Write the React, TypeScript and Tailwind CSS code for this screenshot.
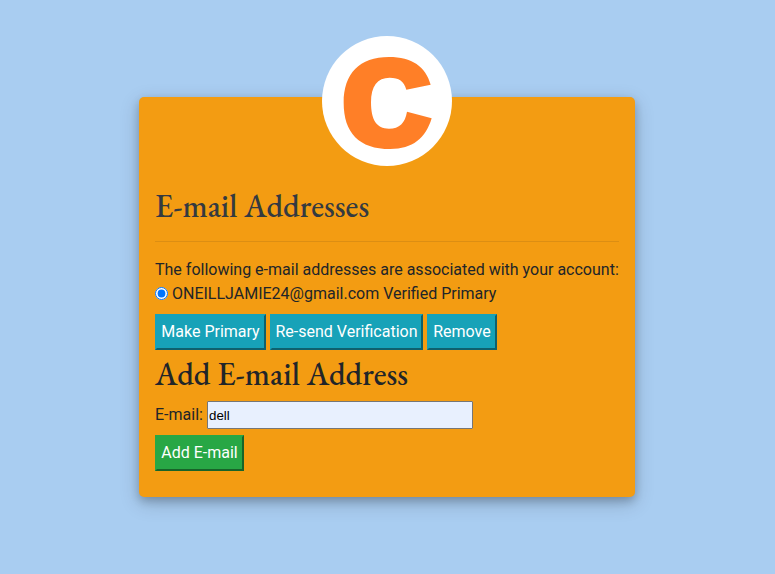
import { useState } from 'react';

function Logo() {
  return (
    <svg className="block size-[130px]" viewBox="0 0 390 390" role="img" aria-label="C">
      <circle cx="195" cy="195" r="195" fill="#fff" />
      <path
        fill="#ff7f27"
        d="M326 146L253 161C246 135 231 125 203 125C166 125 147 150 147 199C147 251 163 278 201 278C233 278 249 261 255 227L329 247C311 307 272 339 205 339C111 339 65 290 65 200C65 113 112 63 201 63C270 63 311 92 326 146Z"
      />
    </svg>
  );
}

function ActionButton({ label, width }: { label: string; width: string }) {
  return (
    <button
      type="button"
      className={`h-9 ${width} border-2 border-t-[#17a2b8] border-l-[#17a2b8] border-r-[#0e616e] border-b-[#0e616e] bg-[#17a2b8] text-center text-base whitespace-nowrap text-white`}
    >
      {label}
    </button>
  );
}

export default function App() {
  const [email, setEmail] = useState('dell');
  return (
    <main className="flex h-[574px] w-full justify-center bg-[#a9cdf1] pt-[97px] pr-px font-[Roboto,sans-serif] text-base leading-6 text-[#212529]">
      <section className="h-[400px] w-[496px] rounded-[5px] bg-[#f39c12] px-4 shadow-[0_4px_8px_0_rgba(0,0,0,0.2),0_6px_20px_0_rgba(0,0,0,0.19)]">
        <div className="-mt-[61px] flex justify-center">
          <Logo />
        </div>
        <h1 className="mt-[21px] h-[54px] font-['EB_Garamond','Liberation_Serif',serif] text-[32px] leading-[38px] font-medium whitespace-nowrap text-[#343a40]">
          E-mail Addresses
        </h1>
        <hr className="border-t border-[#dc8e13]" />
        <p className="mt-4 whitespace-nowrap">
          The following e-mail addresses are associated with your account:
        </p>
        <label className="flex items-center">
          <input type="radio" defaultChecked className="mr-[4px] -mt-0.5 size-[13px]" />
          ONEILLJAMIE24@gmail.com Verified Primary
        </label>
        <div className="mt-2 flex gap-1">
          <ActionButton label="Make Primary" width="w-[111px]" />
          <ActionButton label="Re-send Verification" width="w-[153px]" />
          <ActionButton label="Remove" width="w-[70px]" />
        </div>
        <h2 className="mt-[5px] h-[46px] font-['EB_Garamond','Liberation_Serif',serif] text-[32px] leading-[38px] font-medium whitespace-nowrap">
          Add E-mail Address
        </h2>
        <div className="flex h-7 items-center">
          <label htmlFor="email" className="w-[52px]">
            E-mail:
          </label>
          <input
            id="email"
            type="text"
            value={email}
            onChange={(event) => setEmail(event.target.value)}
            className="h-7 w-[266px] rounded-[1px] border border-[#767676] bg-[#e8f0fe] px-px font-['Liberation_Sans',sans-serif] text-[13.33px] text-black"
          />
        </div>
        <button
          type="button"
          className="mt-1.5 h-9 w-[89px] border-2 border-t-[#28a745] border-r-[#186429] border-b-[#186429] border-l-[#28a745] bg-[#28a745] text-center whitespace-nowrap text-white"
        >
          Add E-mail
        </button>
      </section>
    </main>
  );
}
